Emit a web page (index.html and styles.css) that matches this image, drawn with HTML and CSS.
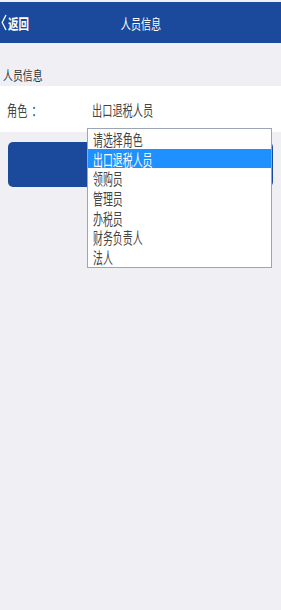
FILE: index.html
```html
<!DOCTYPE html>
<html lang="zh">
<head>
<meta charset="utf-8">
<title>人员信息</title>
<link rel="stylesheet" href="styles.css">
</head>
<body>
<div class="page">
  <header class="header">
    <a class="back">
      <svg class="chev" width="6" height="17" viewBox="0 0 6 17"><path d="M5 1 L1.2 8.5 L5 16" fill="none" stroke="#fff" stroke-width="1.3"/></svg>
      <span class="sq back-text">返回</span>
    </a>
    <div class="title"><span class="sq title-text">人员信息</span></div>
    <div></div>
  </header>
  <div class="section-title"><span class="sq">人员信息</span></div>
  <div class="row">
    <div class="label"><span class="sq">角色<span class="colon">：</span></span></div>
    <div class="value"><span class="sq">出口退税人员</span></div>
  </div>
  <div class="btn"></div>
  <ul class="dropdown">
    <li><span class="sq">请选择角色</span></li>
    <li class="active"><span class="sq">出口退税人员</span></li>
    <li><span class="sq">领购员</span></li>
    <li><span class="sq">管理员</span></li>
    <li><span class="sq">办税员</span></li>
    <li><span class="sq">财务负责人</span></li>
    <li><span class="sq">法人</span></li>
  </ul>
</div>
</body>
</html>
```

FILE: styles.css
```css
html, body {
  margin: 0;
  padding: 0;
}
body {
  background: #efeff4;
  font-family: "Noto Sans CJK SC", "Noto Sans", sans-serif;
  color: #333;
}
.page {
  position: relative;
  height: 610px;
  padding-top: 2px;
  box-sizing: border-box;
  background: #efeff4;
}
.sq {
  display: inline-block;
  white-space: nowrap;
  transform-origin: left center;
  transform: scaleX(0.66);
}
.header {
  height: 41px;
  background: #1b4a9c;
  display: grid;
  grid-template-columns: 60px 1fr 60px;
  align-items: center;
  color: #fff;
}
.back {
  display: flex;
  align-items: center;
  padding-left: 1px;
  gap: 1px;
}
.chev {
  display: block;
}
.back-text {
  font-size: 14px;
  font-weight: bold;
  transform: scaleX(0.75);
  line-height: 1;
}
.title {
  text-align: center;
  font-size: 14px;
  line-height: 1;
}
.title-text {
  transform-origin: center center;
  transform: scaleX(0.72);
}
.section-title {
  height: 43px;
  display: flex;
  align-items: flex-end;
  padding: 0 0 5px 3px;
  box-sizing: border-box;
  font-size: 13px;
  line-height: 1;
}
.section-title .sq {
  transform: scaleX(0.76);
}
.row {
  height: 46px;
  background: #fff;
  display: flex;
  align-items: center;
  padding-left: 7px;
  font-size: 15px;
  line-height: 1;
  color: #444;
}
.label {
  width: 85px;
}
.colon {
  padding-left: 6px;
}
.row .sq {
  transform: scaleX(0.68);
}
.btn {
  margin: 10px 8px 0 8px;
  height: 45px;
  border-radius: 5px;
  background: #1b4a9c;
}
.dropdown {
  position: absolute;
  left: 87px;
  top: 128px;
  width: 183px;
  margin: 0;
  padding: 0;
  list-style: none;
  background: #fff;
  border: 1px solid #9ba5b6;
}
.dropdown li {
  height: 19.7px;
  display: flex;
  align-items: center;
  padding-left: 5px;
  font-size: 16px;
  line-height: 1;
  color: #444;
}
.dropdown li .sq {
  transform: scaleX(0.62);
}
.dropdown li.active {
  background: #1e90ff;
  color: #fff;
}
```
